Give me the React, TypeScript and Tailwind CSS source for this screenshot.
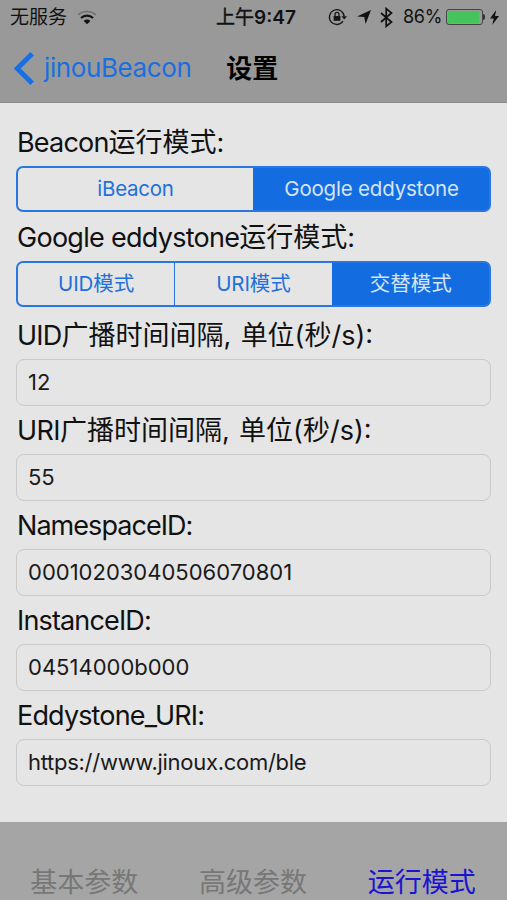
import React, { useState } from 'react';
import clsx from 'clsx';

interface FieldItem {
  id: string;
  label: React.ReactNode;
  value: string;
  tracking?: string;
}

const BEACON_MODES = [
  { id: 'ibeacon', label: <span className="tracking-[-0.25px]">iBeacon</span> },
  { id: 'eddystone', label: <span className="tracking-[-0.2px]">Google eddystone</span> }
];

const EDDYSTONE_MODES = [
  { id: 'uid', label: <><span className="tracking-[-0.1px]">UID</span>模式</> },
  { id: 'uri', label: <><span className="tracking-[-0.1px]">URI</span>模式</> },
  { id: 'both', label: '交替模式' }
];

const TABS = ['基本参数', '高级参数', '运行模式'];

const INTERVAL_SUFFIX = (
  <>
    广播时间间隔<span className="tracking-[0.9px]">, </span>单位(秒/s)<span className="leading-none align-[2px]">:</span>
  </>
);

const INITIAL_FIELDS: FieldItem[] = [
  {
    id: 'uid-interval',
    label: <><span className="tracking-[-0.8px]">UID</span>{INTERVAL_SUFFIX}</>,
    value: '12'
  },
  {
    id: 'uri-interval',
    label: <><span className="tracking-[-0.6px]">URI</span>{INTERVAL_SUFFIX}</>,
    value: '55'
  },
  { id: 'namespace', label: <span className="tracking-[-0.95px]">NamespaceID:</span>, value: '00010203040506070801' },
  { id: 'instance', label: <span className="tracking-[-0.85px]">InstanceID:</span>, value: '04514000b000' },
  {
    id: 'uri',
    label: <span className="tracking-[-0.85px]">Eddystone_URI:</span>,
    value: 'https://www.jinoux.com/ble',
    tracking: 'tracking-[-0.28px]'
  }
];

const StatusBar: React.FC = () => (
  <div className="h-[34px] flex items-center pl-2.5 text-[#111]">
    <div className="w-[206px] shrink-0 flex items-center gap-2.5">
      <span className="text-[19px] leading-none">无服务</span>
      {/* Wifi */}
      <svg className="w-[20px] h-[15px]" viewBox="0 0 20 15" fill="none" strokeWidth="1.6">
        <path d="M1.2 4.8C6 .3 14 .3 18.8 4.8" stroke="#6f6f6f" />
        <path d="M4 8C7.5 4.8 12.5 4.8 16 8" stroke="#111" strokeWidth="2.2" />
        <path d="M6.6 10.9C8.6 9.1 11.4 9.1 13.4 10.9L10 14.3Z" fill="#111" />
      </svg>
    </div>
    <span className="w-[112px] shrink-0 text-[19px] font-semibold leading-none whitespace-nowrap">
      <span className="font-normal [-webkit-text-stroke:0.4px_#111]">上午</span>9:47
    </span>
    <div className="flex items-center">
      {/* Rotation lock */}
      <svg className="w-[19px] h-[18px]" viewBox="0 0 19 18" fill="none" stroke="#161616" strokeWidth="1.3">
        <path d="M15 13.2A7.4 7.4 0 1 1 16.2 8.4" />
        <path d="M13.4 8.2H19L16.2 11.6Z" fill="#161616" stroke="none" />
        <rect x="5.6" y="8" width="6.8" height="4.8" fill="#161616" stroke="none" />
        <path d="M7 8V6.4a2 2 0 0 1 4 0V8" />
      </svg>
      <svg className="ml-[10px] w-[14px] h-[14px]" viewBox="0 0 14 14">
        <path d="M14 0L8.6 14L7.3 7.1L0 6.4Z" fill="#111" />
      </svg>
      <svg className="ml-[9px] w-[13px] h-[21px]" viewBox="0 0 13 21" fill="none" stroke="#111" strokeWidth="1.7">
        <path d="M1 6L11.5 15L6.2 19.4V1.6L11.5 6L1 15" />
      </svg>
      <span className="ml-[10px] w-[39px] text-[18px] leading-none tracking-[-0.3px] whitespace-nowrap">86%</span>
      <div className="ml-1 w-[37px] h-[16px] rounded-[3px] border border-[#444] p-px">
        <div className="w-[31px] h-full rounded-[1px] bg-[#45c45c]" />
      </div>
      <div className="w-[2px] h-[6px] rounded-r bg-[#333]" />
      <svg className="ml-[5px] w-[9px] h-[15px]" viewBox="0 0 9 15">
        <path d="M6.2 0L0 8.4H3.8L2.2 15L9 6H5Z" fill="#111" />
      </svg>
    </div>
  </div>
);

const NavBar: React.FC = () => (
  <div className="h-[68px] flex items-center pl-[14px]">
    <button className="flex items-center gap-[10px] text-[#1a6fe0]">
      <svg className="w-[20px] h-[33px]" viewBox="0 0 20 33" fill="none" stroke="currentColor" strokeWidth="4.8">
        <path d="M18.2 1.7L3.2 16.5L18.2 31.3" />
      </svg>
      <span className="text-[26px] leading-none tracking-[-0.4px]">jinouBeacon</span>
    </button>
    <h1 className="ml-[35px] pt-px text-[26px] leading-none font-bold text-black">设置</h1>
  </div>
);

interface SegmentedProps {
  items: { id: string; label: React.ReactNode }[];
  value: string;
  onChange: (id: string) => void;
}

const Segmented: React.FC<SegmentedProps> = ({ items, value, onChange }) => (
  <div className="h-[46px] flex rounded-[7px] border-2 border-[#2b77e1] bg-[#2b77e1] overflow-hidden">
    {items.map((item, idx) => (
      <button
        key={item.id}
        onClick={() => onChange(item.id)}
        className={clsx(
          'flex-1 basis-0 text-[20.5px] leading-none whitespace-nowrap',
          idx > 0 && 'border-l',
          item.id === value ? 'bg-[#146de0] border-[#146de0] text-[#d5e4f8]' : 'bg-[#e5e5e5] border-[#2b77e1] text-[#2270da]'
        )}
      >
        {item.label}
      </button>
    ))}
  </div>
);

const Label: React.FC<{ children: React.ReactNode }> = ({ children }) => (
  <div className="h-12 pl-px pt-px leading-[48px] text-[27px] whitespace-pre text-[#111]">{children}</div>
);

export default function App() {
  const [beaconMode, setBeaconMode] = useState('eddystone');
  const [eddystoneMode, setEddystoneMode] = useState('both');
  const [activeTab, setActiveTab] = useState('运行模式');
  const [values, setValues] = useState<Record<string, string>>(
    Object.fromEntries(INITIAL_FIELDS.map((f) => [f.id, f.value]))
  );

  return (
    <div className="w-[507px] h-[900px] flex flex-col overflow-hidden bg-[#e5e5e5] font-[Inter,'Noto_Sans_CJK_SC',sans-serif]">
      <header className="h-[103px] shrink-0 bg-[#999999] border-b border-[#8c8c8c]">
        <StatusBar />
        <NavBar />
      </header>

      <main className="h-[719px] shrink-0 px-4 pt-[15px]">
        <Label><span className="tracking-[-0.8px]">Beacon</span>运行模式:</Label>
        <Segmented items={BEACON_MODES} value={beaconMode} onChange={setBeaconMode} />
        <div className="mt-px">
          <Label><span className="tracking-[-0.72px]">Google eddystone</span>运行模式:</Label>
        </div>
        <Segmented items={EDDYSTONE_MODES} value={eddystoneMode} onChange={setEddystoneMode} />

        <div className="mt-1">
          {INITIAL_FIELDS.map((field) => (
            <div key={field.id}>
              <Label>{field.label}</Label>
              <input
                type="text"
                value={values[field.id]}
                onChange={(e) => setValues((prev) => ({ ...prev, [field.id]: e.target.value }))}
                className={clsx(
                  'block w-full h-[47px] rounded-[8px] border border-[#c9c9c9] px-[11px] pb-0.5 text-[22px] text-[#1a1a1a] bg-transparent focus:outline-none',
                  field.tracking
                )}
              />
            </div>
          ))}
        </div>
      </main>

      <footer className="flex-1 flex bg-[#a5a5a5] pt-[43px] pr-px">
        {TABS.map((tab) => (
          <button
            key={tab}
            onClick={() => setActiveTab(tab)}
            className={clsx(
              'flex-1 h-9 text-[27px] leading-9',
              tab === activeTab ? 'text-[#1a14d0]' : 'text-[#777777]'
            )}
          >
            {tab}
          </button>
        ))}
      </footer>
    </div>
  );
}
